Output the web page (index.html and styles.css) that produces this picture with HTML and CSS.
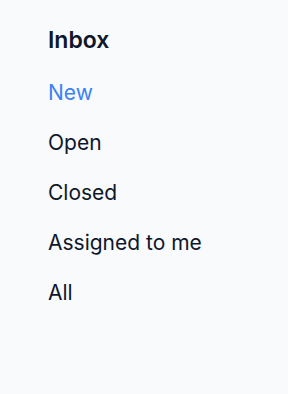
FILE: index.html
```html
<!DOCTYPE html>
<html lang="en">
  <head>
    <title>Inbox</title>
    <link rel="stylesheet" href="styles.css">
  </head>
  <body>
    <nav class="sidebar">
      <h2 class="sidebarTitle">Inbox</h2>
      <ul class="navList">
        <li><a href="#" class="navLink active">New</a></li>
        <li><a href="#" class="navLink">Open</a></li>
        <li><a href="#" class="navLink">Closed</a></li>
        <li><a href="#" class="navLink">Assigned to me</a></li>
        <li><a href="#" class="navLink">All</a></li>
      </ul>
    </nav>
  </body>
</html>
```

FILE: styles.css
```css
html,
body {
  height: 100%;
}
body {
  margin: 0;
  background: #f8fafc;
  font-family: Inter, "Noto Sans", sans-serif;
  color: #0f172a;
}
.sidebar {
  padding: 24px 48px;
}
.sidebarTitle {
  margin: 0 0 12px;
  font-size: 23px;
  font-weight: 600;
  line-height: 32px;
}
.navList {
  margin: 0;
  padding: 0;
  list-style: none;
}
.navLink {
  display: block;
  padding: 11px 0;
  font-size: 21px;
  line-height: 28px;
  color: #0f172a;
  text-decoration: none;
}
.navLink.active {
  color: #3b82f6;
}
```
